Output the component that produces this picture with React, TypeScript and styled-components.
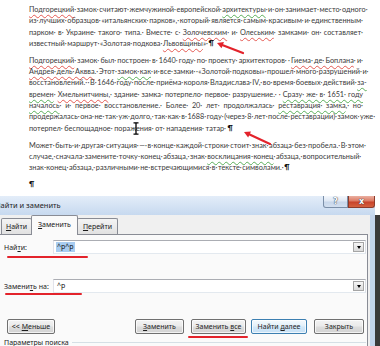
import React from "react";
import styled, { createGlobalStyle } from "styled-components";

const GlobalStyle = createGlobalStyle`
  html, body { margin: 0; padding: 0; background: #ffffff; }
  #root { width: 380px; height: 346px; }
`;

const Page = styled.div`
  position: relative;
  width: 380px;
  height: 346px;
  overflow: hidden;
  background: #ffffff;
`;

/* ---------- document ---------- */

const Doc = styled.div`
  padding: 4px 17px 0 29px;
  font-family: Lato, "Liberation Sans", sans-serif;
  font-size: 7.3px;
  line-height: 11.3px;
  color: #3a3a3a;
`;

const Para = styled.div`
  margin-bottom: 5.7px;
`;

const Line = styled.div<{ $w?: number }>`
  width: ${(p) => (p.$w ? `${p.$w}px` : "auto")};
  white-space: nowrap;
  text-align: justify;
  text-align-last: justify;
  word-spacing: -0.18em;
`;

const Mark = styled.span<{ $c: "r" | "g" }>`
  text-decoration: underline wavy ${(p) => (p.$c === "r" ? "#e45a54" : "#5aae5a")};
  text-decoration-thickness: 1px;
  text-underline-offset: 1.5px;
  text-decoration-skip-ink: none;
`;

const Pilcrow = styled.span`
  font-weight: 700;
  color: #111111;
`;

const CursorAnchor = styled.span`
  position: relative;
  display: inline-block;
  width: 0;
  height: 0;
`;

const IBeam = styled.svg`
  position: absolute;
  left: -3px;
  top: -9px;
  width: 6px;
  height: 13px;
`;

/* ---------- dialog ---------- */

const DialogArea = styled.div`
  display: flex;
  margin-left: -10px;
`;

const Dialog = styled.div`
  width: 385px;
  background: #c3d5ec;
  display: flex;
  flex-direction: column;
  font-family: "Noto Sans", "Open Sans", sans-serif;
  font-size: 7px;
  color: #1b1b1b;
`;

const Edge = styled.div`
  width: 5px;
  margin-top: 19px;
  background: #3a3a3a;
`;

const TitleBar = styled.div`
  height: 19px;
  display: flex;
  align-items: flex-start;
  padding: 0 0 0 5px;
  background: linear-gradient(#e3edf9, #c7d9ef);
`;

const Title = styled.div`
  flex: 1;
  line-height: 19px;
  font-size: 7.5px;
  color: #1e1e1e;
`;

const CapButton = styled.div<{ $close?: boolean }>`
  width: ${(p) => (p.$close ? 27 : 25)}px;
  height: 12px;
  box-sizing: border-box;
  display: flex;
  align-items: center;
  justify-content: center;
  border: 1px solid ${(p) => (p.$close ? "#8c3b2b" : "#7b8fa8")};
  border-top: none;
  border-radius: ${(p) => (p.$close ? "0 0 3px 0" : "0 0 0 3px")};
  background: ${(p) =>
    p.$close
      ? "linear-gradient(#eab0a2 0%, #dc7a64 45%, #c8432b 55%, #d4613f 100%)"
      : "linear-gradient(#f3f7fc 0%, #dfe8f4 45%, #c8d7ea 55%, #d3e0f0 100%)"};
  color: #ffffff;
  font-family: "DejaVu Sans", sans-serif;
  font-size: 8px;
  font-weight: 700;
  text-shadow: 0 0 1px #2b3a4e, 0 0 1px #2b3a4e;
`;

const Client = styled.div`
  margin: 0 5px 0 8px;
  padding-right: 2px;
  background: #f0f0f0;
  display: flex;
  flex-direction: column;
`;

const TabRow = styled.div`
  display: flex;
  align-items: flex-end;
  height: 19px;
  padding-left: 4px;
  position: relative;
  z-index: 1;
`;

const Tab = styled.div<{ $active?: boolean; $w: number }>`
  width: ${(p) => p.$w}px;
  height: ${(p) => (p.$active ? 20 : 16)}px;
  margin-bottom: ${(p) => (p.$active ? -1 : 0)}px;
  margin-left: -1px;
  box-sizing: border-box;
  border: 1px solid #898c95;
  border-bottom: none;
  border-radius: 2px 2px 0 0;
  background: ${(p) =>
    p.$active ? "#fafafa" : "linear-gradient(#f4f4f4, #e1e1e1)"};
  display: flex;
  align-items: center;
  justify-content: center;
  padding-bottom: ${(p) => (p.$active ? 2 : 0)}px;
  font-size: 7px;
  u {
    text-decoration-thickness: 0.5px;
    text-underline-offset: 1px;
  }
`;

const Panel = styled.div`
  position: relative;
  height: 130px;
  border: 1px solid #898c95;
  background: #fafafa;
  padding: 5px 1px 0 5px;
`;

const FieldRow = styled.div<{ $mt?: number }>`
  display: flex;
  align-items: center;
  height: 14px;
  margin-top: ${(p) => p.$mt ?? 0}px;
`;

const Label = styled.div`
  width: 49px;
  font-size: 7px;
  u {
    text-decoration-thickness: 0.5px;
    text-underline-offset: 1px;
  }
`;

const Combo = styled.div`
  flex: 1;
  height: 14px;
  box-sizing: border-box;
  border: 1px solid #abadb3;
  border-color: #abadb3 #dbdfe6 #e3e9ef #e2e3ea;
  background: #ffffff;
  display: flex;
  align-items: center;
  padding-left: 2px;
`;

const ComboText = styled.span<{ $sel?: boolean }>`
  font-size: 7px;
  line-height: 10px;
  padding: 0 1px;
  background: ${(p) => (p.$sel ? "#a9cdf1" : "transparent")};
  color: #111111;
`;

const DropButton = styled.div`
  margin-left: auto;
  margin-right: 1px;
  width: 11px;
  height: 10px;
  box-sizing: border-box;
  border: 1px solid #a5a5a5;
  background: linear-gradient(#f6f6f6, #dadada);
  display: flex;
  align-items: center;
  justify-content: center;
`;

const Caret = styled.div`
  width: 0;
  height: 0;
  border-left: 2.5px solid transparent;
  border-right: 2.5px solid transparent;
  border-top: 3px solid #000000;
`;

const ButtonRow = styled.div`
  display: flex;
  height: 15px;
  margin-top: 26px;
  padding: 0 2px 0 3px;
`;

const Button = styled.div<{ $w: number; $ml?: string; $default?: boolean }>`
  width: ${(p) => p.$w}px;
  margin-left: ${(p) => p.$ml ?? "0"};
  height: 15px;
  box-sizing: border-box;
  border: 1px solid ${(p) => (p.$default ? "#3c7fb1" : "#707070")};
  border-radius: 2px;
  background: ${(p) =>
    p.$default
      ? "linear-gradient(#f4f9fd 0%, #e3f0fa 45%, #d1e7f8 55%, #c6e0f5 100%)"
      : "linear-gradient(#f3f3f3 0%, #ebebeb 45%, #dddddd 55%, #d2d2d2 100%)"};
  box-shadow: inset 0 0 0 1px rgba(255, 255, 255, 0.7);
  display: flex;
  align-items: center;
  justify-content: center;
  font-size: 7px;
  color: #1e1e1e;
  white-space: nowrap;
  u {
    text-decoration-thickness: 0.5px;
    text-underline-offset: 1px;
  }
`;

const Section = styled.div`
  display: flex;
  align-items: center;
  height: 10px;
  margin-top: 3px;
  font-size: 7px;
`;

const SectionRule = styled.div`
  flex: 1;
  height: 1px;
  margin-left: 3px;
  background: #d5dfe5;
`;

const PartialBox = styled.div`
  display: flex;
  width: 45px;
  height: 10px;
  margin: 1px 0 0 59px;
  box-sizing: border-box;
  border: 1px solid #a3a3a3;
  background: #ffffff;
`;

const PartialDrop = styled.div`
  margin-left: auto;
  width: 9px;
  background: linear-gradient(#ececec, #d6d6d6);
  border-left: 1px solid #b5b5b5;
`;

const RedMark = styled.div<{ $x: number; $y: number; $w: number }>`
  position: absolute;
  left: ${(p) => p.$x}px;
  top: ${(p) => p.$y}px;
  width: ${(p) => p.$w}px;
  height: 2px;
  border-radius: 1px;
  background: #e3232b;
`;

const Overlay = styled.svg`
  position: absolute;
  left: 0;
  top: 0;
  width: 380px;
  height: 346px;
  pointer-events: none;
`;

/* ---------- content ---------- */

type Para = { lines: { t: string; w?: number }[] };

const paragraphs: Para[] = [
  {
    lines: [
      { t: "[r:Подгорецкий]·замок·считают·жемчужиной·европейской·[g:архитектуры]·и·он·занимает·место·одного·" },
      { t: "из·лучших·образцов·«итальянских·парков»,·который·является·самым·красивым·и·единственным·" },
      { t: "парком·в·Украине·такого·типа.·Вместе·с·[r:Золочевским]·и·[r:Олеським]·замками·он·составляет·" },
      { t: "известный·маршрут·«Золотая·подкова·[r:Львовщины]»·¶", w: 184 },
    ],
  },
  {
    lines: [
      { t: "[r:Подгорецкий]·замок·был·построен·в·1640·году·по·проекту·архитекторов··[r:Гиема·де·Боплана]·и·" },
      { t: "[r:Андрея·дель·Аквва].·Этот·[g:замок·как]·и·все·замки··«Золотой·подковы»·прошел·много·разрушений·и·" },
      { t: "восстановлений.··В·1646·году·после·приёма·короля·Владислава·IV,·во·время·боевых·действий·[g:за-]" },
      { t: "[g:времен]·[r:Хмельнитчины],·здание·замка·потерпело·первое·разрушение.··[g:Сразу·же·в·1651·году]" },
      { t: "[g:началось]·и·первое·восстановление.·Более·20·лет·продолжалась·[g:реставрация·замка],·но·" },
      { t: "продержалась·она·не·так·уж·долго,·так·как·в·1688·году·(через·8·лет·после·реставрации)·замок·уже·" },
      { t: "потерпел·беспощадное·пораж|ения·от·нападения·татар·¶", w: 204 },
    ],
  },
  {
    lines: [
      { t: "Может·быть·и·другая·ситуация·—·в·конце·каждой·строки·стоит·знак·абзаца·без·пробела.·В·этом·", w: 295 },
      { t: "случае,·сначала·замените·точку-конец·абзаца,·знак·[g:восклицания-конец]·абзаца,·вопросительный·", w: 324 },
      { t: "знак-конец·абзаца,·различными·не·встречающимися·в·тексте·символами.·¶", w: 246 },
    ],
  },
  { lines: [{ t: "¶", w: 5 }] },
];

const spaced = (s: string) => s.replace(/·/g, "· ");

function Cursor() {
  return (
    <CursorAnchor>
      <IBeam viewBox="0 0 6 13">
        <path d="M0.5 0.8h2l0.5 0.6 0.5-0.6h2M3 1.4v10.2M0.5 12.2h2l0.5-0.6 0.5 0.6h2" stroke="#000" strokeWidth="1.3" fill="none" />
      </IBeam>
    </CursorAnchor>
  );
}

function renderLine(src: string) {
  const parts = src.split(/(\[[rg]:[^\]]+\]|¶|\|)/).filter(Boolean);
  return parts.map((p, i) => {
    if (p === "¶") return <Pilcrow key={i}>¶</Pilcrow>;
    if (p === "|") return <Cursor key={i} />;
    const m = p.match(/^\[([rg]):(.+)\]$/);
    if (m) return <Mark key={i} $c={m[1] as "r" | "g"}>{spaced(m[2])}</Mark>;
    return <React.Fragment key={i}>{spaced(p)}</React.Fragment>;
  });
}

function Arrow({ x1, y1, x2, y2 }: { x1: number; y1: number; x2: number; y2: number }) {
  // tail (x1,y1) -> head (x2,y2)
  const a = Math.atan2(y2 - y1, x2 - x1);
  const len = 7;
  const spread = 0.5;
  const bx = x2 - Math.cos(a) * len * 0.8;
  const by = y2 - Math.sin(a) * len * 0.8;
  const p1 = `${x2},${y2}`;
  const p2 = `${x2 - Math.cos(a - spread) * len},${y2 - Math.sin(a - spread) * len}`;
  const p3 = `${x2 - Math.cos(a + spread) * len},${y2 - Math.sin(a + spread) * len}`;
  return (
    <g>
      <line x1={x1} y1={y1} x2={bx} y2={by} stroke="#e3232b" strokeWidth="2.2" strokeLinecap="round" />
      <polygon points={`${p1} ${p2} ${p3}`} fill="#e3232b" />
    </g>
  );
}

export default function App() {
  return (
    <>
      <GlobalStyle />
      <Page>
        <Doc>
          {paragraphs.map((para, pi) => (
            <Para key={pi}>
              {para.lines.map((l, li) => (
                <Line key={li} $w={l.w}>
                  {renderLine(l.t)}
                </Line>
              ))}
            </Para>
          ))}
        </Doc>

        <DialogArea>
          <Dialog>
            <TitleBar>
              <Title>Найти и заменить</Title>
              <CapButton>?</CapButton>
              <CapButton $close>x</CapButton>
            </TitleBar>
            <Client>
              <TabRow>
                <Tab $w={31}>
                  <span>
                    <u>Н</u>айти
                  </span>
                </Tab>
                <Tab $w={47} $active>
                  <span>
                    <u>З</u>аменить
                  </span>
                </Tab>
                <Tab $w={41}>
                  <span>
                    <u>П</u>ерейти
                  </span>
                </Tab>
              </TabRow>
              <Panel>
                <FieldRow>
                  <Label>
                    Най<u>т</u>и:
                  </Label>
                  <Combo>
                    <ComboText $sel>^p^p</ComboText>
                    <DropButton>
                      <Caret />
                    </DropButton>
                  </Combo>
                </FieldRow>
                <FieldRow $mt={25}>
                  <Label>
                    Замени<u>т</u>ь на:
                  </Label>
                  <Combo>
                    <ComboText>^p</ComboText>
                    <DropButton>
                      <Caret />
                    </DropButton>
                  </Combo>
                </FieldRow>
                <ButtonRow>
                  <Button $w={48}>
                    <span>
                      &lt;&lt; <u>М</u>еньше
                    </span>
                  </Button>
                  <Button $w={49} $ml="auto">
                    <span>
                      <u>З</u>аменить
                    </span>
                  </Button>
                  <Button $w={55} $ml="7px">
                    <span>
                      Заменить <u>в</u>се
                    </span>
                  </Button>
                  <Button $w={56} $ml="5px" $default>
                    <span>
                      Найти <u>д</u>алее
                    </span>
                  </Button>
                  <Button $w={50} $ml="7px">
                    <span>Закрыть</span>
                  </Button>
                </ButtonRow>
                <Section>
                  <span>Параметры поиска</span>
                  <SectionRule />
                </Section>
                <PartialBox>
                  <PartialDrop />
                </PartialBox>

                <RedMark $x={8} $y={21} $w={81} />
                <RedMark $x={6} $y={58} $w={77} />
                <RedMark $x={189} $y={101} $w={60} />
              </Panel>
            </Client>
          </Dialog>
          <Edge />
        </DialogArea>

        <Overlay viewBox="0 0 380 346">
          <Arrow x1={243} y1={53} x2={217} y2={43} />
          <Arrow x1={270} y1={144} x2={244} y2={132} />
        </Overlay>
      </Page>
    </>
  );
}
